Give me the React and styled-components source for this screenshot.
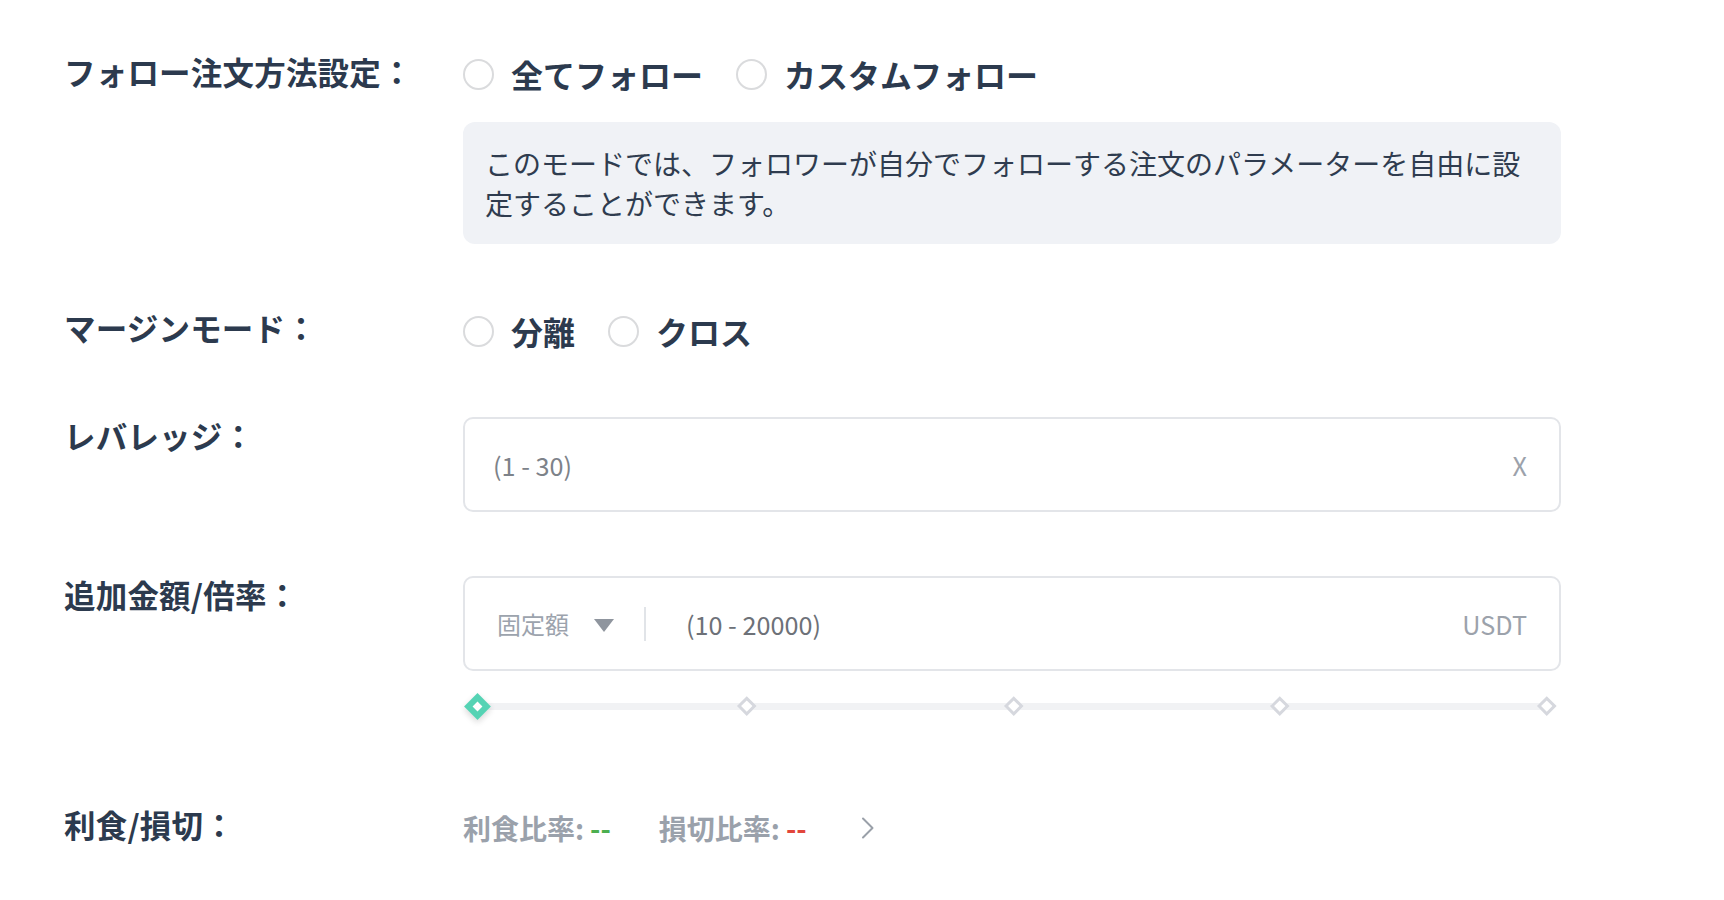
import React from "react";
import styled, { createGlobalStyle } from "styled-components";

const Global = createGlobalStyle`
  html, body { margin: 0; padding: 0; background: #ffffff; }
  body {
    font-family: "Noto Sans CJK JP", "Noto Sans", sans-serif;
    color: #2c3a4e;
    -webkit-font-smoothing: antialiased;
  }
`;

const Page = styled.div`
  padding: 52px 0 40px 64px;
  display: flex;
  flex-direction: column;
`;

const Row = styled.div`
  display: grid;
  grid-template-columns: 399px 1098px;
  align-items: start;
  margin-bottom: ${(p) => p.$gap ?? 65}px;
`;

const Label = styled.div`
  font-size: 31.5px;
  font-weight: 700;
  line-height: 36px;
  letter-spacing: 0.2px;
  color: #2c3a4e;
  white-space: nowrap;
  padding-top: ${(p) => p.$pt ?? 0}px;
`;

const Content = styled.div`
  display: flex;
  flex-direction: column;
`;

const RadioGroup = styled.div`
  display: flex;
  align-items: center;
  height: 44px;
`;

const Option = styled.label`
  display: flex;
  align-items: center;
  gap: 17px;
  margin-right: 33px;
  font-size: 32px;
  font-weight: 700;
  color: #2c3a4e;
  cursor: pointer;
`;

const RadioCircle = styled.span`
  width: 31px;
  height: 31px;
  box-sizing: border-box;
  border-radius: 50%;
  border: 2px solid #dadbdd;
  background: #fff;
  flex: none;
`;

const InfoBox = styled.div`
  margin-top: 26px;
  background: #f0f2f6;
  border-radius: 12px;
  padding: 21px 22px;
  font-size: 28px;
  line-height: 40px;
  color: #2f3c4f;
`;

const InputBox = styled.div`
  height: 95px;
  box-sizing: border-box;
  border: 2px solid #e3e5e9;
  border-radius: 10px;
  display: flex;
  align-items: center;
  padding: 0 32px 0 28px;
  font-size: 25.2px;
  background: #fff;
`;

const Placeholder = styled.span`
  color: ${(p) => p.$color || "#7d8289"};
  flex: 1;
`;

const Suffix = styled.span`
  color: #9ca2ab;
`;

const Select = styled.div`
  display: flex;
  align-items: center;
  margin-left: 4px;
  color: #9ca3ad;
  font-size: 24px;
  gap: 25px;
`;

const Caret = styled.span`
  width: 0;
  height: 0;
  border-left: 10px solid transparent;
  border-right: 10px solid transparent;
  border-top: 13px solid #8f959e;
  margin-top: 3px;
`;

const Divider = styled.span`
  width: 2px;
  height: 34px;
  background: #e1e4e8;
  margin: 0 40px 0 30px;
`;

const SliderRow = styled.div`
  margin: 23px 8px 0 5px;
  height: 24px;
  display: flex;
  align-items: center;
  justify-content: space-between;
  background: linear-gradient(#f1f2f4, #f1f2f4) center / 100% 7px no-repeat;
`;

const Dot = styled.span`
  box-sizing: border-box;
  width: ${(p) => (p.$active ? 19 : 13.5)}px;
  height: ${(p) => (p.$active ? 19 : 13.5)}px;
  background: #fff;
  border: ${(p) => (p.$active ? "6.5px solid #55d3b4" : "3.5px solid #d6d8de")};
  transform: rotate(45deg);
  box-shadow: ${(p) => (p.$active ? "2px 2px 6px rgba(0,0,0,0.16)" : "none")};
  flex: none;
`;

const Ratios = styled.div`
  display: flex;
  align-items: center;
  height: 44px;
  font-size: 28px;
  font-weight: 700;
  color: #9aa1ab;
`;

const Ratio = styled.span`
  display: flex;
  align-items: center;
  margin-right: ${(p) => p.$mr}px;
  white-space: nowrap;
`;

const Dash = styled.span`
  color: ${(p) => p.$color};
  margin-left: 6px;
  font-weight: 700;
`;

const Chevron = () => (
  <svg width="14" height="22" viewBox="0 0 14 22" fill="none">
    <path d="M2 1.5 L11.5 11 L2 20.5" stroke="#9aa0a9" strokeWidth="2" strokeLinecap="round" strokeLinejoin="round" />
  </svg>
);

const Radio = ({ children }) => (
  <Option>
    <RadioCircle />
    {children}
  </Option>
);

export default function App() {
  return (
    <>
      <Global />
      <Page>
        <Row>
          <Label $pt={1}>フォロー注文方法設定：</Label>
          <Content>
            <RadioGroup>
              <Radio>全てフォロー</Radio>
              <Radio>カスタムフォロー</Radio>
            </RadioGroup>
            <InfoBox>
              このモードでは、フォロワーが自分でフォローする注文のパラメーターを自由に設定することができます。
            </InfoBox>
          </Content>
        </Row>

        <Row $gap={64}>
          <Label>マージンモード：</Label>
          <Content>
            <RadioGroup>
              <Radio>分離</Radio>
              <Radio>クロス</Radio>
            </RadioGroup>
          </Content>
        </Row>

        <Row $gap={64}>
          <Label>レバレッジ：</Label>
          <Content>
            <InputBox>
              <Placeholder>(1 - 30)</Placeholder>
              <Suffix>X</Suffix>
            </InputBox>
          </Content>
        </Row>

        <Row $gap={88}>
          <Label>追加金額/倍率：</Label>
          <Content>
            <InputBox>
              <Select>
                固定額
                <Caret />
              </Select>
              <Divider />
              <Placeholder $color="#6d7178">(10 - 20000)</Placeholder>
              <Suffix>USDT</Suffix>
            </InputBox>
            <SliderRow>
              <Dot $active />
              <Dot />
              <Dot />
              <Dot />
              <Dot />
            </SliderRow>
          </Content>
        </Row>

        <Row $gap={0}>
          <Label>利食/損切：</Label>
          <Content>
            <Ratios>
              <Ratio $mr={48}>
                利食比率:<Dash $color="#4caf50">--</Dash>
              </Ratio>
              <Ratio $mr={54}>
                損切比率:<Dash $color="#e2463b">--</Dash>
              </Ratio>
              <Chevron />
            </Ratios>
          </Content>
        </Row>
      </Page>
    </>
  );
}
